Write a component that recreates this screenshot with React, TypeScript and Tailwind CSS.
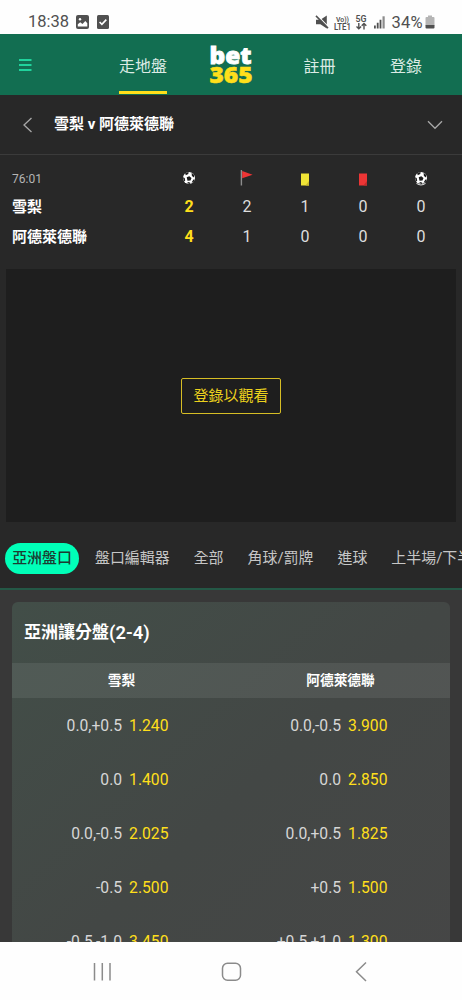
import React from "react";

function Ball({ underline = false }: { underline?: boolean }) {
  return (
    <svg width="14" height="16" viewBox="0 0 14 16" className="block">
      <circle cx="7" cy="8" r="6" fill="#fff" />
      <g transform="translate(0 1)">
        <path d="M4.7 6.3l2.6-1 2.2 1.8-1 2.5-3 .1z M3.2 1.9L6.6.9l-.3 2-2.6 1.4z M9.6 1.7l2.6 2.3-.2 2.5-2.1-1.6z M.9 6.2l1.8.9.5 2.6-1.3.6z M11.4 8.6l1.3.2-1.4 2.6-1.7.2z M4.8 12.1l2-1.1 1.7 1.1-.8 1z" fill="#1c1c1c" />
      </g>
      {underline && <path d="M2.5 13.4Q7 16.6 11.5 13.4" fill="none" stroke="#ddd" strokeWidth="1.1" />}
    </svg>
  );
}

function Flag() {
  return (
    <svg width="14" height="16" viewBox="0 0 14 16" className="block">
      <path d="M1.4 0v15.5" stroke="#8d8d8d" strokeWidth="1.4" />
      <path d="M2.2 1L12.6 4.8 2.2 8.2z" fill="#ef3535" />
    </svg>
  );
}

function Card({ fill, fold }: { fill: string; fold: string }) {
  return (
    <svg width="14" height="16" viewBox="0 0 14 16" className="block">
      <path d="M3 3.5h8v12H3z" fill={fill} />
      <path d="M11 11v4.5H7.5z" fill={fold} />
    </svg>
  );
}

const stats = [
  { icon: <Ball />, home: "2", away: "4", tone: "text-[#ffdf1b] font-bold" },
  { icon: <Flag />, home: "2", away: "1", tone: "text-[#dedede]" },
  { icon: <Card fill="#f0e436" fold="#c9b92c" />, home: "1", away: "0", tone: "text-[#dedede]" },
  { icon: <Card fill="#ec3535" fold="#bf2c2c" />, home: "0", away: "0", tone: "text-[#dedede]" },
  { icon: <Ball underline />, home: "0", away: "0", tone: "text-[#dedede]" },
];

const odds = [
  ["0.0,+0.5", "1.240", "0.0,-0.5", "3.900"],
  ["0.0", "1.400", "0.0", "2.850"],
  ["0.0,-0.5", "2.025", "0.0,+0.5", "1.825"],
  ["-0.5", "2.500", "+0.5", "1.500"],
  ["-0.5,-1.0", "3.450", "+0.5,+1.0", "1.300"],
];

function StatusBar() {
  return (
    <div className="flex h-[34px] shrink-0 items-center bg-[#fefefe] pt-[9px] pl-[28px] text-[#505050]">
      <span className="w-[48px] text-[16.5px] leading-[20px]">18:38</span>
      <svg width="13" height="14" viewBox="0 0 13 14" className="block">
        <rect width="13" height="14" rx="2" fill="#505050" />
        <path d="M1.8 11.5V9.3l2.4-2 2.3 1.6 2.8-3 2 2.3v3.3z" fill="#fff" />
        <circle cx="4" cy="4.2" r="1.2" fill="#fff" />
      </svg>
      <svg width="12" height="14" viewBox="0 0 12 14" className="ml-[8px] block">
        <rect width="12" height="14" rx="1.5" fill="#505050" />
        <path d="M2.6 7l2.3 2.3 4.4-4.7" fill="none" stroke="#fff" strokeWidth="1.6" />
      </svg>
      <svg width="122" height="18" viewBox="314 12.5 122 18" className="ml-[205px] block">
        <g fill="#505050" fontFamily="Roboto, sans-serif">
          <path d="M316 19.2h4.4l6.4-4.2v13l-6.4-4.2H316z" />
          <path d="M317 14.6l12 12.4" stroke="#fefefe" strokeWidth="1.2" />
          <path d="M316 15.4l12 12.2" stroke="#505050" strokeWidth="1.5" />
          <text x="336" y="21" fontSize="8" fontWeight="600" textLength="13" lengthAdjust="spacingAndGlyphs">Vo))</text>
          <text x="334" y="29" fontSize="8.4" fontWeight="600" textLength="17" lengthAdjust="spacingAndGlyphs">LTE1</text>
          <text x="355.5" y="21" fontSize="8.8" fontWeight="600" textLength="11" lengthAdjust="spacingAndGlyphs">5G</text>
          <path d="M358.8 22.5v5.6M356.5 26l2.3 2.3 2.3-2.3M364 29v-5.8M361.7 25.3l2.3-2.3 2.3 2.3" fill="none" stroke="#505050" strokeWidth="1.4" />
          <path d="M374 25h1.8v3H374zM376.8 22.3h1.8V28h-1.8z M379.6 19.3h1.8V28h-1.8z" />
          <path d="M382.5 15.8h2.2V28h-2.2z" fill="#8c8c8c" />
          <text x="391.5" y="27.5" fontSize="16.5" textLength="31">34%</text>
          <path d="M425.5 17.5q0-1 1-1h1.5V15h4v1.5h1.5q1 0 1 1V25h-9z" fill="#b5b5b5" />
          <path d="M425.5 24.5h9V27q0 1-1 1h-7q-1 0-1-1z" />
        </g>
      </svg>
    </div>
  );
}

export default function App() {
  return (
    <div className="flex h-[1000px] w-[462px] flex-col overflow-hidden bg-[#282828] font-['Roboto','Noto_Sans_CJK_TC',sans-serif]">
      <StatusBar />

      <header className="grid h-[61px] shrink-0 grid-cols-[100px_86px_90px_87px_99px] bg-[#126e51] text-[16px] text-[#dcebe5]">
        <div className="flex items-center pl-[19px]">
          <svg width="13" height="12" viewBox="0 0 13 12" className="block">
            <path d="M0 1h12.5M0 6h12.5M0 11h12.5" stroke="#26f5b5" strokeWidth="1.5" />
          </svg>
        </div>
        <div className="flex h-[60px] justify-center">
          <div className="flex items-center border-b-[3px] border-[#ffdf1b] pt-[9px]">走地盤</div>
        </div>
        <svg width="90" height="60" viewBox="186 34 90 60" className="block" fontFamily="'Open Sans', sans-serif" fontWeight="800">
          <text x="209.5" y="63.5" fontSize="22.5" fill="#fff" stroke="#fff" strokeWidth="0.8" textLength="42" lengthAdjust="spacingAndGlyphs">bet</text>
          <text x="209.5" y="83" fontSize="22" fill="#ffdf1b" stroke="#ffdf1b" strokeWidth="0.5" textLength="43" lengthAdjust="spacingAndGlyphs">365</text>
        </svg>
        <div className="flex items-center justify-center pt-[4px]">註冊</div>
        <div className="flex items-center pt-[4px] pl-[27px]">登錄</div>
      </header>

      <div className="flex h-[60px] shrink-0 items-center border-b border-[#3b3b3b] pr-[19px] pl-[22px]">
        <svg width="11" height="16" viewBox="0 0 11 16" className="block">
          <path d="M9.5 1L2 8l7.5 7" fill="none" stroke="#a8a8a8" strokeWidth="1.3" />
        </svg>
        <h1 className="ml-[21px] flex-1 text-[15px] font-bold text-white">雪梨 v 阿德萊德聯</h1>
        <svg width="16" height="10" viewBox="0 0 16 10" className="block">
          <path d="M1 1.3l7 7 7-7" fill="none" stroke="#a8a8a8" strokeWidth="1.3" />
        </svg>
      </div>

      <section className="flex h-[114px] shrink-0 pt-[15px] pl-[12px]">
        <div className="w-[148px] text-[15px] font-bold text-white">
          <div className="h-[22px] text-[12px] leading-[19px] font-normal text-[#b5b5b5]">76:01</div>
          <div className="h-[30px] leading-[30px]">雪梨</div>
          <div className="h-[30px] leading-[30px]">阿德萊德聯</div>
        </div>
        {stats.map((s, i) => (
          <div key={i} className={`w-[58px] text-center text-[16px] ${s.tone}`}>
            <div className="flex h-[22px] justify-center">{s.icon}</div>
            <div className="h-[30px] leading-[30px]">{s.home}</div>
            <div className="h-[30px] leading-[30px]">{s.away}</div>
          </div>
        ))}
      </section>

      <div className="mx-[6px] flex h-[253px] shrink-0 items-center justify-center bg-[#1e1e1e]">
        <button className="h-[36px] w-[100px] rounded-[2px] border border-[#d6bd25] pt-[2px] text-[15px] text-[#ecd11d]">登錄以觀看</button>
      </div>

      <nav className="flex h-[68px] shrink-0 items-center gap-[24px] overflow-hidden border-b-2 border-[#245846] pt-[6px] pl-[5px] text-[14.95px] whitespace-nowrap text-[#c6c6c6]">
        <span className="-mr-[8px] flex h-[31px] w-[74px] shrink-0 items-center justify-center rounded-full bg-[#00ffb8] font-medium text-[#1c3b31]">亞洲盤口</span>
        <span>盤口編輯器</span>
        <span>全部</span>
        <span>角球/罰牌</span>
        <span>進球</span>
        <span>上半場/下半場</span>
      </nav>

      <main className="min-h-0 flex-1 overflow-hidden bg-[#383838] px-[12px] pt-[12px]">
        <div className="h-[400px] rounded-t-[6px] bg-linear-to-br from-[#424e48] via-[#434745] to-[#464646]">
          <h2 className="flex h-[61px] items-center pl-[12px] text-[17px] font-bold text-white">
            亞洲讓分盤<span className="text-[18.4px] font-semibold">(2-4)</span>
          </h2>
          <div className="grid h-[35px] grid-cols-2 items-center bg-white/8 text-center text-[13.7px] font-bold text-white">
            <span>雪梨</span>
            <span>阿德萊德聯</span>
          </div>
          {odds.map((row) => (
            <div key={row[0]} className="grid h-[54px] grid-cols-2 items-center pt-[2px] text-[15.7px] leading-[24px] text-[#d6d6d6]">
              <div className="flex justify-end gap-[7px] pr-[62.5px]">
                <span>{row[0]}</span>
                <span className="text-[#ffdf1b]">{row[1]}</span>
              </div>
              <div className="flex justify-end gap-[7px] pr-[62.5px]">
                <span>{row[2]}</span>
                <span className="text-[#ffdf1b]">{row[3]}</span>
              </div>
            </div>
          ))}
        </div>
      </main>

      <footer className="flex h-[58px] shrink-0 items-center bg-[#fefefe]">
        <svg width="462" height="58" viewBox="0 942 462 58" fill="none" stroke="#8b8b8b" strokeWidth="1.5" className="block">
          <path d="M94.5 963v17.5M102.3 963v17.5M110 963v17.5" />
          <rect x="222.5" y="963.2" width="18" height="17" rx="5" />
          <path d="M366 962.5l-9.5 9.3 9.5 9.2" />
        </svg>
      </footer>
    </div>
  );
}
